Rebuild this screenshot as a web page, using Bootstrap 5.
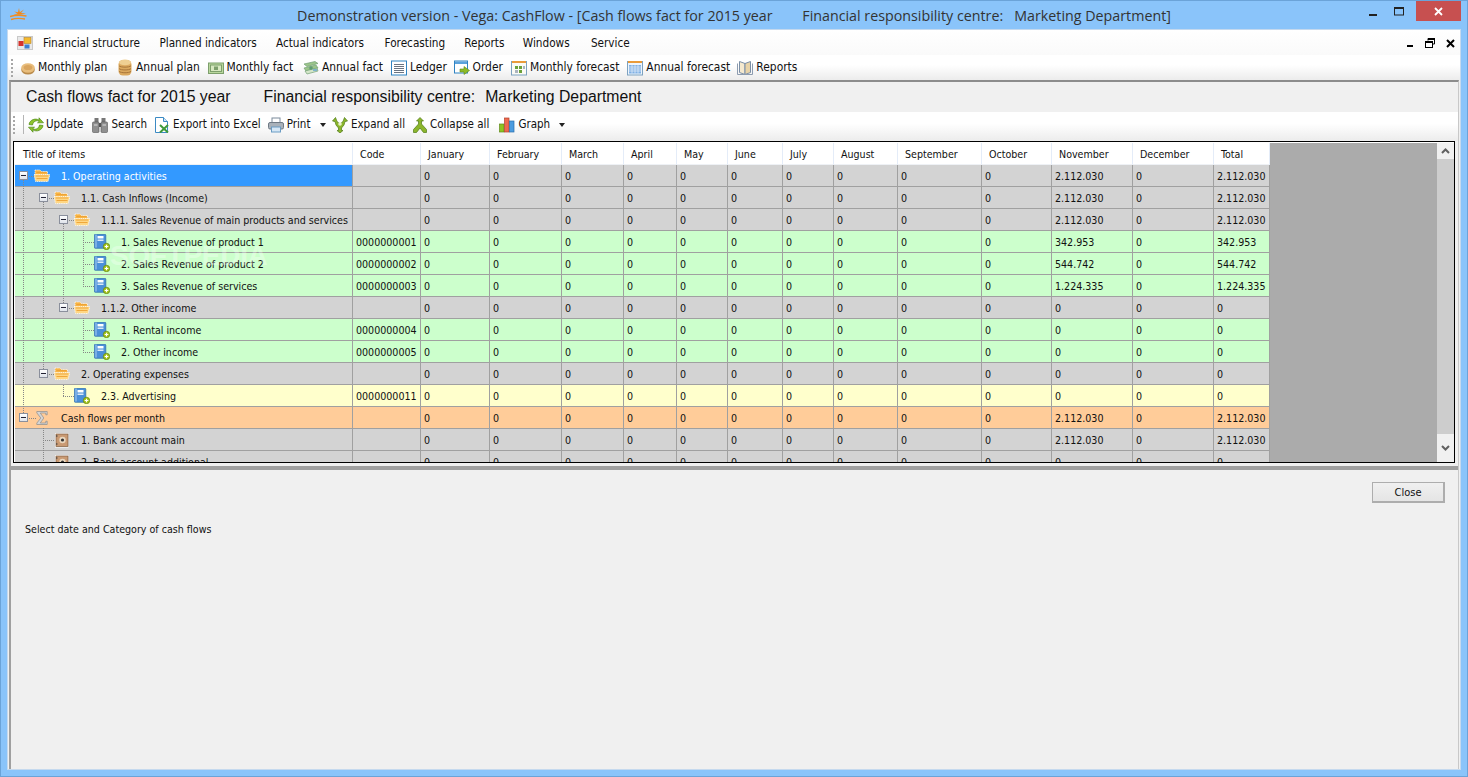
<!DOCTYPE html>
<html lang="en">
<head>
<meta charset="utf-8">
<title>Vega: CashFlow</title>
<link href="https://cdn.jsdelivr.net/npm/bootstrap@5.3.0/dist/css/bootstrap.min.css" rel="stylesheet">
<style>
html,body{height:100%;overflow:hidden}
body{background:#8ac4fa;font-family:"DejaVu Sans Condensed","DejaVu Sans","Liberation Sans",sans-serif;font-size:10.6px;color:#111;box-shadow:inset 0 0 0 1px #6ba3d8}
.win-shell{height:777px;width:1468px}
.cap-bar{height:30px;padding:1px 7px 0 10px;flex:none}
.cap-logo{width:17px;height:14px;margin-top:7px}
.cap-title{font-family:"Open Sans","Noto Sans",sans-serif;font-size:14.28px;color:#333;white-space:pre;left:0;right:0;top:6px;text-align:center;line-height:20px}
.cap-btn{width:26px;height:20px}
.cap-close{width:45px;height:20px;background:#c75050}
.client-area{margin:0 8px 8px 8px;background:#f0f0f0;height:739px;outline:1px solid #c5d9ee}
.menu-strip{height:25px;flex:none;background:linear-gradient(#fff,#fafafa);padding:1px 0 0 9px}
.menu-strip .nav-link{color:#111;font-size:11.7px;padding:0;line-height:24px}
.mdi-ctrls{padding-right:5px;gap:11px}
.tool-strip{height:25px;flex:none;background:linear-gradient(#fff 40%,#ececec)}
.tool-strip.main-tools{padding-left:3px}
.tool-strip.sub-tools{height:29px;padding:0 0 4px 2px}
.tool-strip .btn{--bs-btn-padding-x:0;--bs-btn-padding-y:0;--bs-btn-border-width:0;--bs-btn-font-size:11.9px;--bs-btn-color:#111;--bs-btn-line-height:1.2;--bs-btn-font-family:"DejaVu Sans Condensed","DejaVu Sans",sans-serif;display:flex;align-items:center;gap:3px;white-space:nowrap}
.tool-strip.sub-tools .btn{--bs-btn-font-size:11.5px}
.grip-dots{width:2px;height:18px;background:repeating-linear-gradient(#a8a8a8 0 2px,transparent 2px 4px)}
.tool-sep{width:1px;height:19px;background:#b5b5b5}
.drop-tri{width:0;height:0;border-left:3.5px solid transparent;border-right:3.5px solid transparent;border-top:4px solid #222}
.mdi-area{border-top:2px solid #8c8c8c;border-left:2px solid #a0a0a0;margin:0 1px;border-right:1px solid #c8c8c8;flex:1 1 auto;min-height:0}
.doc-head{height:30px;flex:none;font-family:"Liberation Sans",Arial,sans-serif;font-size:15.8px;color:#111;line-height:29px;padding-left:15px}
.data-frame{margin-left:2px;width:1442px;flex:none;height:322px;border:1px solid #000;padding:1px 0 0 1px;background:#fff}
.grid-scroll{width:1422px;height:319px;background:#ababab;overflow:hidden}
.flow-grid{table-layout:fixed;width:1255px;border-collapse:separate;border-spacing:0;margin:0;font-size:10.6px;color:#111}
.flow-grid th,.flow-grid td{height:22px;padding:2px 0 0 3px;border:0;border-right:1px solid #a0a0a0;border-bottom:1px solid #a0a0a0;line-height:19px;white-space:nowrap;overflow:hidden;vertical-align:top}
.flow-grid thead th{background:#fff;font-weight:400;padding-left:7px;border-right-color:#e4ecf8;border-bottom-color:#eef1f5;color:#111}
.flow-grid thead th:first-child{padding-left:8px}
.flow-grid .tr-gray td{background:#d3d3d3}
.flow-grid .tr-green td{background:#ccffcc}
.flow-grid .tr-yellow td{background:#ffffcc}
.flow-grid .tr-orange td{background:#ffcc99}
.flow-grid .tr-select td:first-child{background:#3399ff;color:#fff}
.flow-grid td.node-cell{padding:0}
.tree-node{position:relative;z-index:2;height:21px}
.node-text{margin-top:2px}
.ind-4{padding-left:4px}.ind-24{padding-left:24px}.ind-44{padding-left:44px}.ind-39{padding-left:39px}.ind-59{padding-left:59px}.ind-79{padding-left:79px}
.fold-box{width:9px;height:9px;border:1px solid #8a8f9c;background:linear-gradient(#fff,#dfe3ea);margin-right:6px;flex:none;display:flex;align-items:center;justify-content:center}
.fold-box::before{content:"";width:5px;height:1px;background:#223}
.node-ico{width:16px;height:16px;margin-right:11px;flex:none}
.sum-ico{width:12px;height:16px;margin:0 13px 0 2px;flex:none}
.tree-guides{position:absolute;left:0;top:0;z-index:1;pointer-events:none}
.sp-mark{position:absolute;left:95px;top:99px;z-index:3;font-family:"Liberation Sans",sans-serif;font-weight:700;font-size:28px;line-height:28px;color:#fff;opacity:.3;letter-spacing:-.3px}
.v-scroll{width:17px;height:319px;background:#f0f0f0;flex:none}
.v-arrow{height:16px;flex:none}
.v-thumb{height:275px;background:#cdcdcd;flex:none}
.split-bar{height:4px;background:#a0a0a0;margin-top:3px;flex:none}
.lower-pane{padding:12px 13px 0 0}
.close-btn{--bs-btn-padding-x:0;--bs-btn-padding-y:0;--bs-btn-font-size:11px;--bs-btn-font-family:"DejaVu Sans Condensed","DejaVu Sans",sans-serif;--bs-btn-border-radius:0;--bs-btn-border-color:#adadad;--bs-btn-color:#111;width:73px;height:21px;line-height:20px;background:linear-gradient(#f0f0f0,#e5e5e5);border-width:1px 2px 2px 1px}
.hint-line{font-size:10.6px;color:#111;padding:19px 0 0 14px;line-height:14px}
.menu-icon-slot{margin-right:10px}
.item-a{margin-right:19.4px}.item-b{margin-right:19.3px}.item-c{margin-right:20.5px}.item-d{margin-right:19px}.item-e{margin-right:18.3px}.item-f{margin-right:21.2px}
.t-mp{margin-right:10.7px}.t-ap{margin-right:7.8px}.t-mf{margin-right:9.8px}.t-af{margin-right:8px}.t-lg{margin-right:6.7px}.t-or{margin-right:8px}.t-fm{margin-right:8px}.t-fy{margin-right:7.2px}
.stack-ico{margin-right:1px}
.s-after{margin:0 4px 0 8px}
.tool-strip .btn.tight{gap:2px}
.u-up{margin-right:9px}.u-se{margin-right:7px}.u-ex{margin-right:7px}.u-xa{margin-right:7px}.u-co{margin-right:10px}
.tri-a{margin:0 5.5px 0 7px}.tri-b{margin-left:6px}
.hd-a{margin-right:33px}.hd-b{margin-right:10px}
</style>
</head>
<body class="m-0">
<svg width="0" height="0" class="position-absolute">
<defs>
<symbol id="i-coin" viewBox="0 0 14 16"><ellipse cx="7" cy="9.800" rx="6.800" ry="4.800" fill="#b98a4a"/><ellipse cx="7" cy="8" rx="6.800" ry="4.800" fill="#e8bd7c"/><ellipse cx="7" cy="7.500" rx="4.300" ry="2.600" fill="#d9a55f"/></symbol>
<symbol id="i-stack" viewBox="0 0 14 17"><rect x=".5" y="1" width="13" height="15.500" rx="4.500" fill="#dba95f"/><ellipse cx="7" cy="3.400" rx="6" ry="2.800" fill="#efcf92"/><path d="M1 6.800c2 1.800 10 1.800 12 0M1 9.600c2 1.800 10 1.800 12 0M1 12.400c2 1.800 10 1.800 12 0" stroke="#a9763a" fill="none"/></symbol>
<symbol id="i-bill" viewBox="0 0 16 16"><rect x=".5" y="3" width="15" height="10.500" fill="#b9d79d" stroke="#7d9f6c"/><rect x="2.500" y="5" width="11" height="6.500" fill="#d7e8c0" stroke="#7d9f6c"/><rect x="6" y="6.500" width="4" height="3.500" fill="#7d9f6c"/></symbol>
<symbol id="i-bills" viewBox="0 0 16 16"><path d="M1 4l11-2.500 3 2-11 3zM1 8l12-3 2 3-12 3z" fill="#9cc58b" stroke="#73a174" stroke-width=".7"/><path d="M2 11l12-3 1 3-11 3z" fill="#d4e6c9" stroke="#73a174" stroke-width=".7"/><circle cx="8" cy="8" r="1.800" fill="#5f9c73"/><rect x="10" y="9" width="4" height="2" fill="#7fb3cc"/></symbol>
<symbol id="i-ledger" viewBox="0 0 16 16"><rect x=".5" y="1" width="15" height="14" fill="#fff" stroke="#2f83c2"/><path d="M3 4.500h10M3 6.500h10M3 8.500h10M3 10.500h10M3 12.500h10" stroke="#6a7482"/></symbol>
<symbol id="i-order" viewBox="0 0 16 16"><rect x=".5" y="1" width="13" height="12" fill="#fff" stroke="#2f83c2"/><rect x="1" y="1.500" width="12" height="2.500" fill="#5aa2dc"/><path d="M6 9h4V6.500L15.500 10.500 10 14.500V12H6z" fill="#8dbb27" stroke="#5e8a1a" stroke-width=".6"/></symbol>
<symbol id="i-fcm" viewBox="0 0 16 16"><rect x=".5" y="1.500" width="15" height="13.500" fill="#fbfbf5" stroke="#7da2c0"/><rect x="1" y="1" width="14" height="2" fill="#e99b3a"/><path d="M4 6h3v3H4zM8 6h3v3H8zM8 10h3v3H8z" fill="#6aa13a"/><path d="M4 10h3v3H4zM12 6h2v3h-2z" fill="#aab4be"/></symbol>
<symbol id="i-fcy" viewBox="0 0 16 16"><rect x=".5" y="1.500" width="15" height="13.500" fill="#eef5fc" stroke="#7da2c0"/><rect x="1" y="1" width="14" height="2" fill="#e99b3a"/><path d="M2 5h12v8.500H2z" fill="#7fb0e4"/><path d="M2 7h12M2 9h12M2 11h12M5 5v8.500M8 5v8.500M11 5v8.500" stroke="#e8f1fb" stroke-width=".7"/></symbol>
<symbol id="i-book" viewBox="0 0 16 16"><path d="M8 3.500L2.500 1.500v11L8 14.500z" fill="#f5e9cf" stroke="#7a8ea6"/><path d="M8 3.500l5.500-2v11L8 14.500z" fill="#e8d3a8" stroke="#7a8ea6"/><path d="M.5 3.500v11H8h7.500v-11" fill="none" stroke="#8d9cb0"/></symbol>
<symbol id="i-sync" viewBox="0 0 16 16"><path d="M1 7.500C1.500 3 7.500 .5 11 3.200V.8l4.500 5H9.500l1.800-1.600C8.500 2.800 5 4.500 4.500 8z" fill="#8ec42c" stroke="#4f8a1b" stroke-width=".7"/><path d="M15 8.500c-.5 4.500-6.500 7-10 4.300v2.400L.5 10.200h6l-1.800 1.600c2.800 1.400 6.300-.3 6.800-3.800z" fill="#8ec42c" stroke="#4f8a1b" stroke-width=".7"/></symbol>
<symbol id="i-binoc" viewBox="0 0 16 16"><rect x="2.500" y="1" width="4" height="4.500" fill="#777"/><rect x="9.500" y="1" width="4" height="4.500" fill="#777"/><rect x=".5" y="5" width="6.500" height="10.500" rx="1" fill="#8f8f8f" stroke="#555" stroke-width=".6"/><rect x="9" y="5" width="6.500" height="10.500" rx="1" fill="#8f8f8f" stroke="#555" stroke-width=".6"/><rect x="7" y="6" width="2" height="4" fill="#555"/><path d="M2 8h3.500M10.500 8h3.500" stroke="#ddd"/></symbol>
<symbol id="i-xls" viewBox="0 0 16 16"><path d="M1.500.5h8l4 4v11h-12z" fill="#fff" stroke="#3b8ac4"/><path d="M9.500.5v4h4" fill="#cfe5f6" stroke="#3b8ac4"/><path d="M6 8l8 7.500M14 8l-8 7.500" stroke="#3f9a3a" stroke-width="2"/></symbol>
<symbol id="i-print" viewBox="0 0 16 16"><rect x="4" y="1" width="8" height="5" fill="#fff" stroke="#7a8a9a"/><rect x=".5" y="5.500" width="15" height="6.500" rx="1.500" fill="#a9b1b9" stroke="#6f7a85"/><rect x="3.500" y="10" width="9" height="5" fill="#d6e7f5" stroke="#6a9cc4"/></symbol>
<symbol id="i-expand" viewBox="0 0 16 16"><path d="M.5 4L3.500.5 5 4.500 8 7l3-2.500L12.500.5 15.500 4 13 4.500 12 8 9.500 11v2.500h1.500L8 16l-3-2.500h1.500V11L4 8 3 4.500z" fill="#8cb62c" stroke="#4d7a14" stroke-width=".7"/><circle cx="8" cy="7" r="1.800" fill="#e9f3c5"/></symbol>
<symbol id="i-collapse" viewBox="0 0 16 16"><path d="M8 .5L11.500 4H9.500v3l5 5.500V15.500H11.500L8 11 4.500 15.500H1.500v-3l5-5.500V4H4.500z" fill="#8cb62c" stroke="#4d7a14" stroke-width=".7"/></symbol>
<symbol id="i-bars" viewBox="0 0 16 16"><rect x=".5" y="7" width="4.500" height="8" fill="#8fc31f" stroke="#5e8a1a" stroke-width=".7"/><rect x="5.500" y="1" width="4.500" height="14" fill="#ee6a4f" stroke="#b3402b" stroke-width=".7"/><rect x="10.500" y="4" width="4.500" height="11" fill="#4d9de0" stroke="#2a6ea8" stroke-width=".7"/></symbol>
<symbol id="i-folder" viewBox="0 0 16 16"><path d="M1 2h5l1.500 1.500h6V7H1z" fill="#f7b445" stroke="#fff" stroke-width=".7" stroke-dasharray="1.500 .7"/><path d="M0 6.500h16l-2 7H1.500z" fill="#ffd784" stroke="#fff" stroke-width=".7" stroke-dasharray="1.500 .7"/><path d="M2.500 4.500h10M1.800 8h12.500M2.500 10.500h11" stroke="#eda233" stroke-width=".9"/></symbol>
<symbol id="i-item" viewBox="0 0 16 16"><rect x=".3" y=".3" width="11.500" height="14" rx="1" fill="#4a90d9" stroke="#2d6cab" stroke-width=".7"/><rect x="3.500" y="2" width="6" height="2.500" fill="#fff"/><rect x="3.500" y="5.500" width="6" height="1.500" fill="#dbe9f7"/><path d="M2 .5v13" stroke="#a9cdf0"/><circle cx="12.500" cy="12.500" r="3.200" fill="#a7c71d" stroke="#5f7f0f" stroke-width=".7"/><path d="M10.700 12.500h3.600M12.500 10.700v3.600" stroke="#fff" stroke-width="1.100"/></symbol>
<symbol id="i-sum" viewBox="0 0 12 16"><path d="M.8 1.500h10.400v3.300H9.800V3H4.300L7.800 8 4.300 13h5.500v-1.800h1.400v3.300H.8v-1.400L4.800 8 .8 2.900z" fill="#d4d4d4" stroke="#8d8d8d" stroke-width=".7"/></symbol>
<symbol id="i-safe" viewBox="0 0 16 16"><rect x="1" y="1" width="13.500" height="14.500" fill="#fff"/><rect x="2" y="2" width="12" height="12.500" fill="#c99a73" stroke="#7d5a3c" stroke-width=".7"/><circle cx="8.500" cy="8" r="3.200" fill="#e9d8c0"/><circle cx="8.500" cy="8" r="1.600" fill="#333"/><path d="M2 4h1.500M2 12h1.500" stroke="#333"/></symbol>
</defs>
</svg>
<div class="win-shell d-flex flex-column">
  <header class="cap-bar d-flex justify-content-between position-relative">
    <svg class="cap-logo" viewBox="0 0 17 14"><path d="M9 0l.8 4.200L14 1.500l-3 3.500 5 .5-6 1.200H3.500L7.500 5.500 4 3.500l4 .7z" fill="#f08a1d"/><path d="M0 8.500c5-1.500 11-1.500 16.500-.5M1 11.500c4-1.200 10-1.200 14-.5" stroke="#ef8d25" stroke-width="1.400" fill="none"/></svg>
    <div class="cap-title position-absolute">Demonstration version - Vega: CashFlow - [Cash flows fact for 2015 year        Financial responsibility centre:   Marketing Department]</div>
    <div class="d-flex align-items-start position-relative">
      <div class="cap-btn d-flex justify-content-center align-items-end"><svg width="10" height="8" viewBox="0 0 10 8"><rect x="1" y="1" width="8" height="2" fill="#222"/></svg></div>
      <div class="cap-btn d-flex justify-content-center align-items-center"><svg width="10" height="9" viewBox="0 0 10 9"><rect x=".5" y=".5" width="9" height="7.500" fill="none" stroke="#222"/><rect y="0" width="10" height="2" fill="#222"/></svg></div>
      <div class="cap-close d-flex justify-content-center align-items-center ms-1"><svg width="9" height="9" viewBox="0 0 9 9"><path d="M1 1l7 7M8 1L1 8" stroke="#fff" stroke-width="1.800"/></svg></div>
    </div>
  </header>
  <div class="client-area d-flex flex-column">
    <nav class="menu-strip d-flex align-items-center justify-content-between">
      <ul class="nav flex-nowrap align-items-center">
        <li class="nav-item menu-icon-slot"><svg width="16" height="14" viewBox="0 0 16 14" class="d-block"><rect width="16" height="14" fill="#c9c9c9"/><rect x="1" y="1" width="14" height="12" fill="#e9e9e9"/><rect x="7" y="1.500" width="7" height="6" fill="#f4b92e" stroke="#b5832a" stroke-width=".6"/><rect x="1.500" y="5" width="5" height="5" fill="#d5322c"/><rect x="7.500" y="8.500" width="5" height="4" fill="#3b7fd1"/></svg></li>
        <li class="nav-item item-a"><a class="nav-link" href="#">Financial structure</a></li>
        <li class="nav-item item-b"><a class="nav-link" href="#">Planned indicators</a></li>
        <li class="nav-item item-c"><a class="nav-link" href="#">Actual indicators</a></li>
        <li class="nav-item item-d"><a class="nav-link" href="#">Forecasting</a></li>
        <li class="nav-item item-e"><a class="nav-link" href="#">Reports</a></li>
        <li class="nav-item item-f"><a class="nav-link" href="#">Windows</a></li>
        <li class="nav-item"><a class="nav-link" href="#">Service</a></li>
      </ul>
      <div class="mdi-ctrls d-flex align-items-center">
        <svg width="8" height="9" viewBox="0 0 8 9"><rect x="1" y="6" width="6" height="2" fill="#000"/></svg>
        <svg width="10" height="10" viewBox="0 0 10 10"><path d="M3 2.500V.5h6.500V6H7.500" fill="none" stroke="#000"/><rect x=".5" y="3.500" width="7" height="6" fill="#fff" stroke="#000"/><rect x="0" y="3" width="8" height="2" fill="#000"/><rect x="3" y="0" width="7" height="2" fill="#000"/></svg>
        <svg width="9" height="9" viewBox="0 0 9 9"><path d="M1 1l7 7M8 1L1 8" stroke="#000" stroke-width="2"/></svg>
      </div>
    </nav>
    <div class="tool-strip main-tools d-flex align-items-center">
      <span class="grip-dots me-2"></span>
      <button class="btn t-mp"><svg width="14" height="16"><use href="#i-coin"/></svg>Monthly plan</button>
      <button class="btn t-ap"><svg width="14" height="17" class="stack-ico"><use href="#i-stack"/></svg>Annual plan</button>
      <button class="btn t-mf"><svg width="16" height="16"><use href="#i-bill"/></svg>Monthly fact</button>
      <button class="btn t-af"><svg width="16" height="16"><use href="#i-bills"/></svg>Annual fact</button>
      <button class="btn t-lg"><svg width="16" height="16"><use href="#i-ledger"/></svg>Ledger</button>
      <button class="btn t-or"><svg width="16" height="16"><use href="#i-order"/></svg>Order</button>
      <button class="btn t-fm"><svg width="16" height="16"><use href="#i-fcm"/></svg>Monthly forecast</button>
      <button class="btn t-fy"><svg width="16" height="16"><use href="#i-fcy"/></svg>Annual forecast</button>
      <button class="btn"><svg width="16" height="16"><use href="#i-book"/></svg>Reports</button>
    </div>
    <div class="mdi-area d-flex flex-column">
      <div class="doc-head d-flex"><span class="hd-a">Cash flows fact for 2015 year</span><span class="hd-b">Financial responsibility centre:</span><span>Marketing Department</span></div>
      <div class="tool-strip sub-tools d-flex align-items-center">
        <span class="grip-dots"></span><span class="tool-sep s-after"></span>
        <button class="btn tight u-up"><svg width="16" height="16"><use href="#i-sync"/></svg>Update</button>
        <button class="btn u-se"><svg width="16" height="16"><use href="#i-binoc"/></svg>Search</button>
        <button class="btn u-ex"><svg width="16" height="16"><use href="#i-xls"/></svg>Export into Excel</button>
        <button class="btn u-pr"><svg width="16" height="16"><use href="#i-print"/></svg>Print<span class="drop-tri tri-a"></span></button>
        <button class="btn u-xa"><svg width="16" height="16"><use href="#i-expand"/></svg>Expand all</button>
        <button class="btn tight u-co"><svg width="16" height="16"><use href="#i-collapse"/></svg>Collapse all</button>
        <button class="btn"><svg width="16" height="16"><use href="#i-bars"/></svg>Graph<span class="drop-tri tri-b"></span></button>
      </div>
      <div class="data-frame d-flex">
        <div class="grid-scroll position-relative">
          <table class="table flow-grid" id="flowTable">
            <colgroup id="flowCols"></colgroup>
            <thead><tr id="flowHead"></tr></thead>
            <tbody id="flowBody"></tbody>
          </table>
          <svg class="tree-guides" width="1255" height="319" viewBox="15 143 1255 319" fill="none" stroke="#868686" stroke-dasharray="1 1">
            <path d="M23.500 176V418M43.500 198V374M63.500 220V308M83.500 230V286M83.500 318V352M63.500 385V396M43.500 428V462"/>
            <path d="M23 176.500h11M43 198.500h11M63 220.500h11M83 242.500h11M83 264.500h11M83 286.500h11M63 308.500h11M83 330.500h11M83 352.500h11M43 374.500h11M63 396.500h11M23 418.500h13M43 440.500h11M43 462.500h11"/>
          </svg>
          <div class="sp-mark">SOFTPEDIA</div>
        </div>
        <div class="v-scroll d-flex flex-column">
          <div class="v-arrow d-flex align-items-center justify-content-center"><svg width="9" height="6" viewBox="0 0 9 6"><path d="M1 5l3.500-3.500L8 5" fill="none" stroke="#606060" stroke-width="2"/></svg></div>
          <div class="v-thumb"></div>
          <div class="flex-grow-1 d-flex align-items-center justify-content-center"><svg width="9" height="6" viewBox="0 0 9 6"><path d="M1 1l3.500 3.500L8 1" fill="none" stroke="#606060" stroke-width="2"/></svg></div>
        </div>
      </div>
      <div class="split-bar"></div>
      <div class="lower-pane">
        <div class="d-flex justify-content-end"><button class="btn close-btn">Close</button></div>
        <div class="hint-line">Select date and Category of cash flows</div>
      </div>
    </div>
  </div>
</div>
<script>
var widths=[338,68,69,72,62,53,51,55,51,64,84,70,81,81,56];
document.getElementById('flowCols').innerHTML=widths.map(function(w){return '<col width="'+w+'">';}).join('');
var heads=['Title of items','Code','January','February','March','April','May','June','July','August','September','October','November','December','Total'];
document.getElementById('flowHead').innerHTML=heads.map(function(h){return '<th scope="col">'+h+'</th>';}).join('');
var T='2.112.030';
var rows=[
['tr-gray tr-select','ind-4',1,'folder','1. Operating activities','',T,T],
['tr-gray','ind-24',1,'folder','1.1. Cash Inflows (Income)','',T,T],
['tr-gray','ind-44',1,'folder','1.1.1. Sales Revenue of main products and services','',T,T],
['tr-green','ind-79',0,'item','1. Sales Revenue of product 1','0000000001','342.953','342.953'],
['tr-green','ind-79',0,'item','2. Sales Revenue of product 2','0000000002','544.742','544.742'],
['tr-green','ind-79',0,'item','3. Sales Revenue of services','0000000003','1.224.335','1.224.335'],
['tr-gray','ind-44',1,'folder','1.1.2. Other income','','0','0'],
['tr-green','ind-79',0,'item','1. Rental income','0000000004','0','0'],
['tr-green','ind-79',0,'item','2. Other income','0000000005','0','0'],
['tr-gray','ind-24',1,'folder','2. Operating expenses','','0','0'],
['tr-yellow','ind-59',0,'item','2.3. Advertising','0000000011','0','0'],
['tr-orange','ind-4',1,'sum','Cash flows per month','',T,T],
['tr-gray','ind-39',0,'safe','1. Bank account main','',T,T],
['tr-gray','ind-39',0,'safe','2. Bank account additional','','0','0']
];
document.getElementById('flowBody').innerHTML=rows.map(function(r){
  var ico=r[3]==='sum'?'<svg class="sum-ico"><use href="#i-sum"/></svg>':'<svg class="node-ico"><use href="#i-'+r[3]+'"/></svg>';
  var h='<tr class="'+r[0]+'"><td class="node-cell"><div class="tree-node d-flex align-items-center '+r[1]+'">'+(r[2]?'<span class="fold-box"></span>':'')+ico+'<span class="node-text">'+r[4]+'</span></div></td><td>'+r[5]+'</td>';
  for(var i=0;i<10;i++)h+='<td>0</td>';
  return h+'<td>'+r[6]+'</td><td>0</td><td>'+r[7]+'</td></tr>';
}).join('');
</script>
<script src="https://cdn.jsdelivr.net/npm/bootstrap@5.3.0/dist/js/bootstrap.bundle.min.js"></script>
</body>
</html>
